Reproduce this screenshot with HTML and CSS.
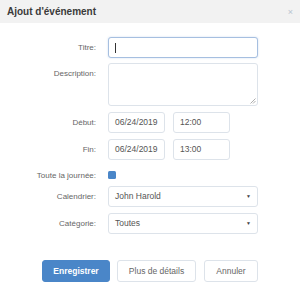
FILE: index.html
```html
<!DOCTYPE html>
<html lang="fr">

<head>
    <meta charset="UTF-8">
    <meta name="viewport" content="width=device-width, initial-scale=1.0">
    <title>Ajout d'événement</title>
    <link rel="stylesheet" href="styles.css">
</head>

<body>
    <div class="dialog">
        <div class="dialog-header">
            <h1>Ajout d'événement</h1>
            <span class="close">&times;</span>
        </div>

        <form class="event-form">
            <div class="row row-title">
                <label>Titre:</label>
                <div class="field focused"><span class="caret"></span></div>
            </div>
            <div class="row row-desc">
                <label>Description:</label>
                <div class="field textarea">
                    <svg class="grip" width="6" height="6" viewBox="0 0 6 6">
                        <path d="M5.5 0.5 L0.5 5.5 M5.5 3 L3 5.5" stroke="#999" stroke-width="0.8" fill="none" />
                    </svg>
                </div>
            </div>
            <div class="row row-date">
                <label>Début:</label>
                <div class="pair">
                    <div class="field short">06/24/2019</div>
                    <div class="field short">12:00</div>
                </div>
            </div>
            <div class="row row-date row-end">
                <label>Fin:</label>
                <div class="pair">
                    <div class="field short">06/24/2019</div>
                    <div class="field short">13:00</div>
                </div>
            </div>
            <div class="row row-check">
                <label>Toute la journée:</label>
                <span class="checkbox"></span>
            </div>
            <div class="row row-select">
                <label>Calendrier:</label>
                <div class="field select">John Harold<span class="arrow">&#9660;</span></div>
            </div>
            <div class="row row-select">
                <label>Catégorie:</label>
                <div class="field select">Toutes<span class="arrow">&#9660;</span></div>
            </div>

            <div class="actions">
                <button type="button" class="btn primary">Enregistrer</button>
                <button type="button" class="btn details">Plus de détails</button>
                <button type="button" class="btn cancel">Annuler</button>
            </div>
        </form>
    </div>
</body>

</html>
```

FILE: styles.css
```css
body {
    margin: 0;
    font-family: "Liberation Sans", Arial, sans-serif;
    background-color: #fff;
}

.dialog {
    width: 300px;
    height: 290px;
    background-color: #fff;
}

.dialog-header {
    height: 23px;
    background-color: #f2f2f2;
    display: flex;
    align-items: center;
    justify-content: space-between;
    padding: 0 7px;
}

.dialog-header h1 {
    margin: 0;
    font-size: 10px;
    font-weight: bold;
    color: #3a3a3a;
}

.close {
    font-size: 9px;
    color: #b8c4d0;
}

.event-form {
    padding-top: 14px;
}

.row {
    display: grid;
    grid-template-columns: 96px 150px;
    column-gap: 12px;
    align-items: start;
    margin-bottom: 6px;
}

.row label {
    text-align: right;
    font-size: 8px;
    line-height: 21px;
    color: #666;
}

.row-title {
    margin-bottom: 5px;
}

.row-end {
    margin-bottom: 4px;
}

.field {
    box-sizing: border-box;
    height: 21px;
    border: 1px solid #dde3ea;
    border-radius: 3px;
    padding: 0 6px;
    font-size: 8.5px;
    line-height: 19px;
    color: #555;
    background-color: #fff;
}

.focused {
    border-color: #a6bfe0;
    box-shadow: 0 0 2px rgba(102, 150, 210, 0.35);
    display: flex;
    align-items: center;
}

.caret {
    width: 1px;
    height: 10px;
    background-color: #333;
}

.textarea {
    height: 43px;
    position: relative;
}

.grip {
    position: absolute;
    right: 1px;
    bottom: 1px;
}

.pair {
    display: flex;
    gap: 8px;
}

.short {
    width: 57px;
}

.row-check {
    align-items: center;
    height: 22px;
    margin-bottom: 0;
}

.checkbox {
    width: 8px;
    height: 8px;
    border-radius: 1.5px;
    background-color: #4a86c8;
}

.select {
    display: flex;
    justify-content: space-between;
}

.arrow {
    font-size: 5px;
    color: #444;
}

.actions {
    display: flex;
    gap: 7px;
    padding-left: 42px;
    margin-top: 26px;
}

.btn {
    box-sizing: border-box;
    height: 22px;
    padding: 0;
    border: 1px solid #dde3ea;
    border-radius: 3px;
    background-color: #fff;
    color: #666;
    font-family: "Liberation Sans", Arial, sans-serif;
    font-size: 8.5px;
    cursor: pointer;
}

.primary {
    width: 68px;
    border-color: #4a86c8;
    background-color: #4a86c8;
    color: #fff;
    font-weight: bold;
}

.details {
    width: 79px;
}

.cancel {
    width: 54px;
    margin-left: 1px;
}
```
